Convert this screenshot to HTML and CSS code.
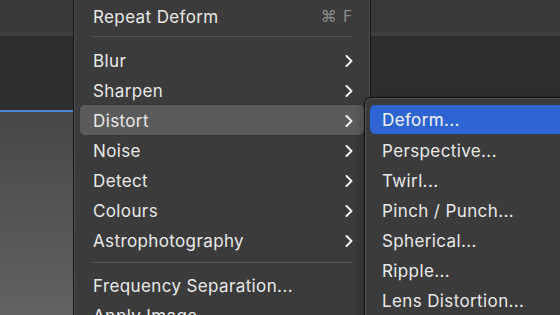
FILE: index.html
```html
<!DOCTYPE html>
<html>
<head>
<meta charset="utf-8">
<link rel="stylesheet" href="styles.css">
</head>
<body>
<div class="app">
  <div class="left-panel">
    <div class="band top"></div>
    <div class="band ridge"></div>
    <div class="band dark"></div>
    <div class="band blue"></div>
    <div class="band canvas"></div>
  </div>
  <div class="menu">
    <div class="item"><span>Repeat Deform</span><span class="shortcut">⌘F</span></div>
    <div class="sep"></div>
    <div class="item"><span>Blur</span><svg class="chev" viewBox="0 0 8 12"><polyline points="1.5,1 6.5,6 1.5,11"/></svg></div>
    <div class="item"><span>Sharpen</span><svg class="chev" viewBox="0 0 8 12"><polyline points="1.5,1 6.5,6 1.5,11"/></svg></div>
    <div class="item active"><span>Distort</span><svg class="chev" viewBox="0 0 8 12"><polyline points="1.5,1 6.5,6 1.5,11"/></svg></div>
    <div class="item"><span>Noise</span><svg class="chev" viewBox="0 0 8 12"><polyline points="1.5,1 6.5,6 1.5,11"/></svg></div>
    <div class="item"><span>Detect</span><svg class="chev" viewBox="0 0 8 12"><polyline points="1.5,1 6.5,6 1.5,11"/></svg></div>
    <div class="item"><span>Colours</span><svg class="chev" viewBox="0 0 8 12"><polyline points="1.5,1 6.5,6 1.5,11"/></svg></div>
    <div class="item"><span>Astrophotography</span><svg class="chev" viewBox="0 0 8 12"><polyline points="1.5,1 6.5,6 1.5,11"/></svg></div>
    <div class="sep sep2"></div>
    <div class="item"><span>Frequency Separation...</span></div>
    <div class="item"><span>Apply Image...</span></div>
  </div>
  <div class="right-panel">
    <div class="band top"></div>
    <div class="band ridge"></div>
    <div class="band dark"></div>
  </div>
  <div class="submenu">
    <div class="item selected"><span>Deform...</span></div>
    <div class="item"><span>Perspective...</span></div>
    <div class="item"><span>Twirl...</span></div>
    <div class="item"><span>Pinch / Punch...</span></div>
    <div class="item"><span>Spherical...</span></div>
    <div class="item"><span>Ripple...</span></div>
    <div class="item"><span>Lens Distortion...</span></div>
  </div>
</div>
</body>
</html>
```

FILE: styles.css
```css
* { box-sizing: border-box; }
html, body {
  margin: 0;
  padding: 0;
  width: 560px;
  height: 315px;
  overflow: hidden;
  background: #2f2f2f;
}
body {
  font-family: Inter, "Liberation Sans", "DejaVu Sans", sans-serif;
  font-size: 17px;
  letter-spacing: 0.38px;
  color: #e9e9e9;
}
.app {
  position: relative;
  display: flex;
  width: 560px;
  height: 315px;
}
.left-panel {
  width: 74px;
  flex: none;
  display: flex;
  flex-direction: column;
  border-right: 1px solid #151515;
}
.right-panel {
  flex: 1;
  display: flex;
  flex-direction: column;
  border-left: 1px solid #151515;
}
.band.top { height: 32px; background: #383838; }
.band.ridge { height: 5px; background: #3e3e3e; border-bottom: 1px solid #2a2a2a; }
.band.dark { height: 73px; background: #2e2e2e; }
.right-panel .band.dark { flex: 1; }
.band.blue { height: 2px; background: #4b87d8; }
.band.canvas {
  flex: 1;
  background: linear-gradient(to bottom, #474747, #626262);
}
.menu {
  width: 296px;
  flex: none;
  background: #3b3b3b;
  border-left: 1px solid #4e4e4e;
  border-right: 1px solid #4e4e4e;
  padding-top: 1px;
  display: flex;
  flex-direction: column;
}
.item {
  height: 30px;
  flex: none;
  margin: 0 5px;
  padding: 1px 12px 0 13px;
  display: flex;
  align-items: center;
  justify-content: space-between;
  border-radius: 5px;
  white-space: nowrap;
}
.item.active { background: #5b5b5b; }
.shortcut {
  color: #8a8a8a;
  font-family: "DejaVu Sans", sans-serif;
  font-size: 16px;
  letter-spacing: 6px;
  margin-right: -6px;
}
.chev {
  width: 8px;
  height: 12px;
  margin-right: -1px;
  fill: none;
  stroke: #f0f0f0;
  stroke-width: 2;
  stroke-linecap: round;
  stroke-linejoin: round;
}
.sep {
  height: 14px;
  flex: none;
  margin: 0 17px 0 18px;
  position: relative;
}
.sep::after {
  content: "";
  position: absolute;
  left: 0;
  right: 0;
  top: 5px;
  height: 1px;
  background: #555555;
}
.sep2 { height: 15px; }
.sep2::after { top: 7px; }
.submenu {
  position: absolute;
  left: 364px;
  top: 97px;
  width: 220px;
  height: 240px;
  background: #3b3b3b;
  border: 1px solid #111;
  border-radius: 7px;
  box-shadow: inset 0 0 0 1px #505050, 0 4px 12px rgba(0,0,0,0.35);
  padding-top: 7px;
  display: flex;
  flex-direction: column;
}
.submenu .item {
  margin: 0 0 0 5px;
  padding-left: 12px;
}
.submenu .item.selected {
  background: #2f65d2;
  border-radius: 5px 0 0 5px;
  height: 29px;
  margin-bottom: 1px;
  color: #f4f4f4;
}
```
